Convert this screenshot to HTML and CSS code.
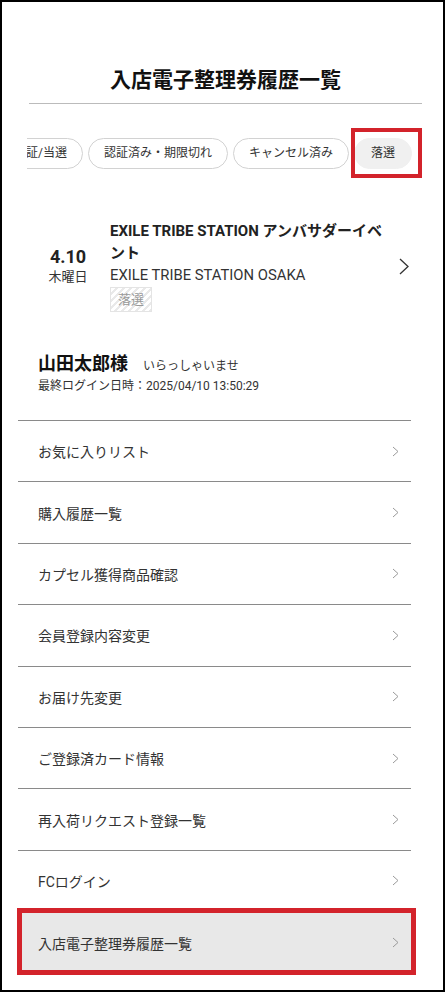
FILE: index.html
```html
<!DOCTYPE html>
<html lang="ja">

<head>
    <meta charset="UTF-8">
    <meta name="viewport" content="width=device-width, initial-scale=1.0">
    <title>入店電子整理券履歴一覧</title>
    <link rel="stylesheet" href="styles.css">
</head>

<body>
    <div class="frame">
        <h1 class="page-title">入店電子整理券履歴一覧</h1>

        <div class="tabs">
            <a class="tab">認証/当選</a>
            <a class="tab">認証済み・期限切れ</a>
            <a class="tab">キャンセル済み</a>
            <a class="tab is-active">落選</a>
        </div>

        <div class="ticket">
            <div class="ticket-date">
                <span class="ticket-day">4.10</span>
                <span class="ticket-week">木曜日</span>
            </div>
            <div class="ticket-body">
                <p class="ticket-title">EXILE TRIBE STATION アンバサダーイベント</p>
                <p class="ticket-shop">EXILE TRIBE STATION OSAKA</p>
                <span class="ticket-status">落選</span>
            </div>
            <svg class="ticket-arrow" width="10" height="17" viewBox="0 0 10 17">
                <polyline points="1,1 9,8.5 1,16" fill="none" stroke="#333" stroke-width="1.3" />
            </svg>
        </div>

        <div class="member">
            <p class="member-name">山田太郎様<span class="member-greet">いらっしゃいませ</span></p>
            <p class="member-login">最終ログイン日時：2025/04/10 13:50:29</p>
        </div>

        <ul class="menu">
            <li class="menu-item">お気に入りリスト<svg class="menu-arrow" width="7" height="11" viewBox="0 0 7 11"><polyline points="1,1 6,5.5 1,10" /></svg></li>
            <li class="menu-item">購入履歴一覧<svg class="menu-arrow" width="7" height="11" viewBox="0 0 7 11"><polyline points="1,1 6,5.5 1,10" /></svg></li>
            <li class="menu-item">カプセル獲得商品確認<svg class="menu-arrow" width="7" height="11" viewBox="0 0 7 11"><polyline points="1,1 6,5.5 1,10" /></svg></li>
            <li class="menu-item">会員登録内容変更<svg class="menu-arrow" width="7" height="11" viewBox="0 0 7 11"><polyline points="1,1 6,5.5 1,10" /></svg></li>
            <li class="menu-item">お届け先変更<svg class="menu-arrow" width="7" height="11" viewBox="0 0 7 11"><polyline points="1,1 6,5.5 1,10" /></svg></li>
            <li class="menu-item">ご登録済カード情報<svg class="menu-arrow" width="7" height="11" viewBox="0 0 7 11"><polyline points="1,1 6,5.5 1,10" /></svg></li>
            <li class="menu-item">再入荷リクエスト登録一覧<svg class="menu-arrow" width="7" height="11" viewBox="0 0 7 11"><polyline points="1,1 6,5.5 1,10" /></svg></li>
            <li class="menu-item">FCログイン<svg class="menu-arrow" width="7" height="11" viewBox="0 0 7 11"><polyline points="1,1 6,5.5 1,10" /></svg></li>
            <li class="menu-item is-current">入店電子整理券履歴一覧<svg class="menu-arrow" width="7" height="11" viewBox="0 0 7 11"><polyline points="1,1 6,5.5 1,10" /></svg></li>
        </ul>
    </div>
</body>

</html>
```

FILE: styles.css
```css
* {
    box-sizing: border-box;
}

body {
    margin: 0;
    background-color: #fff;
    color: #333;
    font-family: Roboto, "Noto Sans CJK JP", sans-serif;
}

p {
    margin: 0;
}

.frame {
    width: 445px;
    height: 992px;
    border: 2px solid #000;
    overflow: hidden;
}

.page-title {
    margin: 63px 21px 0 27px;
    padding-bottom: 8px;
    border-bottom: 1px solid #bbb;
    color: #111;
    font-size: 21px;
    line-height: 30px;
    font-weight: bold;
    text-align: center;
}

/* tabs scrolled to the end, start side is cut off */
.tabs {
    display: flex;
    justify-content: flex-end;
    gap: 5px;
    margin: 23px 20px 0 25px;
    padding: 11px 11px 10px 0;
    overflow: hidden;
}

.tab {
    flex: none;
    padding: 0 15px;
    border: 1px solid #d2d2d2;
    border-radius: 16px;
    background-color: #fff;
    font-size: 12px;
    line-height: 29px;
    white-space: nowrap;
    position: relative;
}

.tab.is-active {
    padding: 0 16px;
    background-color: #f0f0f0;
    border-color: #f0f0f0;
}

.tab.is-active::after {
    content: "";
    position: absolute;
    top: -11px;
    right: -11px;
    bottom: -10px;
    left: -4px;
    border: 4px solid #d3232b;
}

.ticket {
    display: flex;
    align-items: center;
    margin: 41px 34px 0 41px;
}

.ticket-date {
    display: flex;
    flex-direction: column;
    align-items: center;
    width: 50px;
    flex: none;
}

.ticket-day {
    font-size: 18px;
    font-weight: bold;
    line-height: 22px;
    color: #222;
}

.ticket-week {
    font-size: 13px;
    line-height: 18px;
}

.ticket-body {
    flex: 1;
    margin-left: 17px;
}

.ticket-title {
    font-size: 15px;
    font-weight: bold;
    line-height: 22px;
    color: #222;
}

.ticket-shop {
    font-size: 14.8px;
    line-height: 22px;
}

.ticket-status {
    display: inline-block;
    margin-top: 1px;
    padding: 0 7px;
    border: 1px solid #e4e4e4;
    background: repeating-linear-gradient(135deg, #fff 0 3px, #e9e9e9 3px 5px);
    color: #999;
    font-size: 13px;
    line-height: 23px;
}

.ticket-arrow {
    flex: none;
    margin-left: 12px;
}

.member {
    margin: 39px 0 0 36px;
}

.member-name {
    font-size: 18px;
    font-weight: bold;
    line-height: 26px;
    color: #111;
}

.member-greet {
    margin-left: 15px;
    font-size: 12px;
    font-weight: normal;
    line-height: 1;
    color: #333;
}

.member-login {
    font-size: 12px;
    line-height: 18px;
}

.menu {
    list-style: none;
    margin: 25px 32px 0 16px;
    padding: 0;
    border-top: 1px solid #8a8a8a;
}

.menu-item {
    display: flex;
    align-items: center;
    justify-content: space-between;
    height: 61.4px;
    padding: 0 12px 0 20px;
    border-bottom: 1px solid #8a8a8a;
    font-size: 14px;
    position: relative;
}

.menu-arrow {
    fill: none;
    stroke: #9a9a9a;
    stroke-width: 1;
}

.menu-item.is-current {
    background-color: #e8e8e8;
    border-bottom: none;
}

.menu-item.is-current::after {
    content: "";
    position: absolute;
    top: -4px;
    right: -5px;
    bottom: -1px;
    left: -1px;
    border: 5px solid #d3232b;
}
```
